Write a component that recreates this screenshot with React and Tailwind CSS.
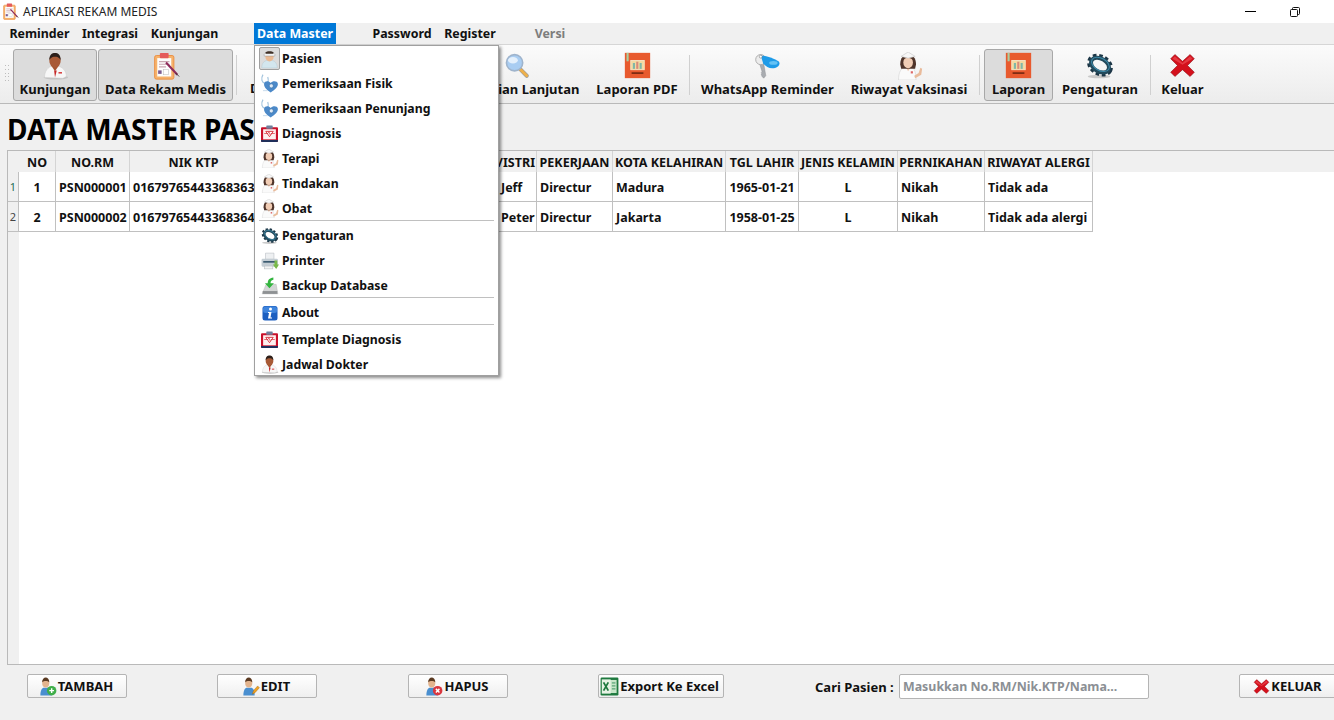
const FONT = "font-['Noto_Sans',sans-serif]";

const DoctorIcon = ({ className }) => (
  <svg viewBox="0 0 32 32" className={className}>
    <ellipse cx="17" cy="29" rx="14" ry="2.500" fill="#c4c4c4" />
    <path d="M4 29c0-7 4-12 9-13h6c5 1 10 5 10 12l-4 2z" fill="#f7f7f7" stroke="#c9c9c9" strokeWidth="0.500" />
    <path d="M12 16l4 6 4-6z" fill="#a5532f" />
    <path d="M15 21l1 8 2-8z" fill="#c62828" />
    <rect x="20" y="23" width="4" height="1.600" fill="#d32f2f" />
    <ellipse cx="16" cy="10" rx="6.500" ry="8" fill="#a85a36" />
    <path d="M9.500 9c0-6 3-8 6.500-8s6.500 2 6.500 8c-2-3-4.500-3.500-6.500-3.500S11.500 6 9.500 9z" fill="#2c1f1a" />
  </svg>
);

const ClipboardSyringeIcon = ({ className }) => (
  <svg viewBox="0 0 32 32" className={className}>
    <rect x="3" y="4" width="22" height="27" rx="2" fill="#f6b26b" stroke="#ea8a3a" />
    <rect x="6" y="7" width="16" height="21" fill="#fdfdfd" />
    <rect x="9" y="1" width="10" height="6" rx="1" fill="#e45b5b" />
    <path d="M8 11h12M8 14h12M8 17h8" stroke="#c9a7b0" strokeWidth="1.200" />
    <rect x="7" y="21" width="4" height="4" fill="#7a5a90" />
    <rect x="13" y="20" width="6" height="6" fill="#fff" stroke="#bbb" strokeWidth="0.600" />
    <path d="M16 12l13 14" stroke="#8e2a5a" strokeWidth="2.400" />
    <path d="M27 24l4 4" stroke="#333" strokeWidth="1" />
  </svg>
);

const MagnifierIcon = ({ className }) => (
  <svg viewBox="0 0 32 32" className={className}>
    <path d="M19 19l9 9" stroke="#9a9a9a" strokeWidth="5" strokeLinecap="round" />
    <path d="M20 20l8 8" stroke="#eeb04a" strokeWidth="3.400" strokeLinecap="round" />
    <circle cx="13" cy="12" r="10" fill="#a9cdf2" stroke="#9fb4cc" strokeWidth="2" />
    <ellipse cx="11" cy="9" rx="6" ry="4" fill="#e4f0fc" />
  </svg>
);

const ReportIcon = ({ className }) => (
  <svg viewBox="0 0 32 32" className={className}>
    <rect x="1" y="1" width="30" height="30" fill="#e85a2e" />
    <rect x="3" y="1" width="2.500" height="10" fill="#a9cfa0" />
    <rect x="8" y="10" width="16" height="11" fill="#f4d9a0" stroke="#f7e9cc" strokeWidth="1" />
    <rect x="10.500" y="13" width="2.500" height="7" fill="#7fb7a8" />
    <rect x="14.500" y="11.500" width="2.500" height="8.500" fill="#d98a7a" />
    <rect x="18.500" y="13" width="2.500" height="7" fill="#7fb7a8" />
    <rect x="9" y="24" width="14" height="2" fill="#7a2a12" />
  </svg>
);

const KeyIcon = ({ className }) => (
  <svg viewBox="0 0 32 32" className={className}>
    <path d="M6 12l5-1 3 17-2.500 3-2-2-1-3 1-1-1-1 1-1z" fill="#a9acb0" stroke="#85888c" strokeWidth="0.500" />
    <circle cx="8" cy="9" r="6" fill="#ececec" stroke="#a5a5a5" />
    <path d="M8 4c7 1 15 3 21 7 3 3 0 7-4 8-7 1-10-1-14-5z" fill="#1e9be8" />
    <ellipse cx="23" cy="13" rx="5" ry="2.200" fill="#63c2f5" />
    <circle cx="8" cy="5.500" r="1.700" fill="#fff" stroke="#666" strokeWidth="0.600" />
  </svg>
);

const NurseIcon = ({ className }) => (
  <svg viewBox="0 0 32 32" className={className}>
    <path d="M4 32c0-9 3-14 8-15h6c4 1 6 6 6 15z" fill="#fafafa" stroke="#cfcfcf" strokeWidth="0.600" />
    <path d="M12 17l3 5 3-5z" fill="#efc6ad" />
    <rect x="18" y="22" width="2.500" height="2.500" fill="#d66" />
    <path d="M22 27l5-3 2-6 2 1-1 7-7 4z" fill="#e9bb9b" />
    <path d="M6 14C6 6 10 3 15 3s9 3 9 11l-1 5H7z" fill="#4f342a" />
    <ellipse cx="15" cy="12" rx="5.500" ry="6.500" fill="#f1cdb5" />
    <path d="M9 9c2-3 9-3 12 0l-1-3H10z" fill="#4f342a" />
    <path d="M7 5l8-5 8 5-8 2z" fill="#f7f7f7" stroke="#bdbdbd" strokeWidth="0.600" />
  </svg>
);

const GearIcon = ({ className }) => (
  <svg viewBox="0 0 32 32" className={className}>
    <ellipse cx="15" cy="28" rx="13" ry="2" fill="#c9c9c9" />
    <g transform="rotate(30 16 15)">
      <ellipse cx="16" cy="15" rx="13.500" ry="10" fill="none" stroke="#1c3646" strokeWidth="4" strokeDasharray="4 3" />
      <ellipse cx="16" cy="15" rx="11" ry="7.500" fill="none" stroke="#234a5c" strokeWidth="4.500" />
      <ellipse cx="16" cy="14" rx="11" ry="7" fill="none" stroke="#3f8aa8" strokeWidth="1.200" />
    </g>
  </svg>
);

const RedXIcon = ({ className }) => (
  <svg viewBox="0 0 32 32" className={className}>
    <path d="M7 3l9 8 9-8 5 5-8 8 8 8-5 5-9-8-9 8-5-5 8-8-8-8z" fill="#d4101c" stroke="#8f0d14" strokeWidth="0.700" />
    <path d="M7 5l9 8 9-8 3 3-12 7-12-7z" fill="#f0555c" opacity="0.600" />
  </svg>
);

const PatientIcon = ({ className }) => (
  <svg viewBox="0 0 32 32" className={className}>
    <path d="M3 31c0-9 5-12 10-13h6c5 1 10 4 10 13z" fill="#d3e6ee" stroke="#a9c2cc" strokeWidth="0.600" />
    <ellipse cx="16" cy="12" rx="7" ry="8" fill="#eab992" />
    <path d="M7 8c2-4 16-4 18 0v3H7z" fill="#f5f5f5" stroke="#888" strokeWidth="0.700" />
    <path d="M9 5c3-3 11-3 14 0l-1 2H10z" fill="#3f3026" />
  </svg>
);

const StethoscopeIcon = ({ className }) => (
  <svg viewBox="0 0 32 32" className={className}>
    <path d="M5 1C1 8 3 15 9 16c5 0 6-5 4-11" fill="none" stroke="#a3c4de" strokeWidth="2" />
    <path d="M18 31C10 26 6 21 7 16c1-5 8-5 11-1 3-4 11-4 12 1 1 5-4 10-12 15z" fill="#4c89c8" />
    <circle cx="19" cy="20" r="3.500" fill="#dfeaf5" stroke="#2f6aa5" />
    <path d="M5 28h8" stroke="#c3d8ea" strokeWidth="1.500" />
  </svg>
);

const DiagnosisIcon = ({ className }) => (
  <svg viewBox="0 0 32 32" className={className}>
    <rect x="0" y="4" width="32" height="28" rx="2" fill="#c9102a" />
    <path d="M0 28h32v2a2 2 0 0 1-2 2H2a2 2 0 0 1-2-2z" fill="#1f2f5a" />
    <rect x="4" y="8" width="24" height="19" fill="#fdf0f0" />
    <rect x="10" y="1" width="12" height="6" rx="1" fill="#6f7f9c" />
    <path d="M9 12h14l-7 10z" fill="#fff" stroke="#d4202c" strokeWidth="1.600" />
    <path d="M6 16h7l2-3 2 5 2-2h7" fill="none" stroke="#d4202c" strokeWidth="1.200" />
  </svg>
);

const PrinterIcon = ({ className }) => (
  <svg viewBox="0 0 32 32" className={className}>
    <path d="M8 2h15v11H8z" fill="#eef0f2" stroke="#b5bcc2" />
    <rect x="1" y="12" width="29" height="14" rx="2" fill="#c4cdd4" />
    <rect x="4" y="16" width="21" height="3" fill="#3b5a70" />
    <rect x="6" y="25" width="15" height="5" fill="#f3f3f3" stroke="#b5bcc2" />
    <path d="M24 15v7h-3l6 8 5-8h-3v-7z" fill="#79b94a" />
  </svg>
);

const BackupIcon = ({ className }) => (
  <svg viewBox="0 0 32 32" className={className}>
    <path d="M9 13h18l3 17H2z" fill="#d3d5d5" stroke="#a5a5a5" strokeWidth="0.600" />
    <rect x="3" y="25" width="26" height="5" fill="#8e9193" />
    <path d="M22 1c-7 1-10 4-10 10H7l8 9 8-9h-6c0-3 1-5 5-6z" fill="#33b53f" />
  </svg>
);

const InfoIcon = ({ className }) => (
  <svg viewBox="0 0 32 32" className={className}>
    <rect x="1" y="2" width="30" height="29" rx="5" fill="#1c5fc0" />
    <rect x="2" y="3" width="28" height="13" rx="5" fill="#3e84dc" />
    <circle cx="17" cy="8" r="3" fill="#fff" />
    <path d="M12 14h7l-2 11h3v2h-8l2-11h-2z" fill="#fff" />
  </svg>
);

const ExcelIcon = ({ className }) => (
  <svg viewBox="0 0 32 32" className={className}>
    <rect x="1" y="1" width="30" height="30" rx="2" fill="#1f7a3f" />
    <rect x="14" y="5" width="14" height="22" fill="#c8e6c9" />
    <rect x="3" y="4" width="15" height="24" fill="#e8f3e5" />
    <path d="M6 9l8 14M14 9L6 23" stroke="#1f7a3f" strokeWidth="3" />
    <path d="M20 10h6M20 15h6M20 20h6" stroke="#2e8b57" strokeWidth="1.500" />
  </svg>
);

// Person with a small coloured badge, used by the bottom buttons
const UserBadgeIcon = ({ className, badge }) => (
  <svg viewBox="0 0 32 32" className={className}>
    <path d="M4 31c0-9 3-13 6-13h7c3 0 6 4 6 13z" fill="#4a8fd0" />
    <ellipse cx="13" cy="10" rx="6" ry="7.500" fill="#e3b48e" />
    <path d="M7 9c0-5 3-8 6-8s6 3 6 8c-3-3-9-3-12 0z" fill="#5a3a22" />
    {badge === 'add' && (
      <>
        <circle cx="23" cy="23" r="8" fill="#3fae49" />
        <path d="M23 19v8M19 23h8" stroke="#fff" strokeWidth="2.400" />
      </>
    )}
    {badge === 'delete' && (
      <>
        <circle cx="23" cy="23" r="8" fill="#d9363e" />
        <path d="M20 20l6 6M26 20l-6 6" stroke="#fff" strokeWidth="2.400" />
      </>
    )}
    {badge === 'edit' && <path d="M19 29l2-6 7-8 3 3-7 8z" fill="#f0a020" stroke="#8a5a10" strokeWidth="0.600" />}
  </svg>
);

const ToolButton = ({ label, width, active, children }) => (
  <div
    className={`flex h-[52px] shrink-0 flex-col items-center rounded-[3px] border pt-[2px] ${width} ${
      active ? 'border-[#a8a8a8] bg-[#dcdcdc]' : 'border-transparent'
    }`}
  >
    <div className="flex h-[27px] w-full items-center justify-center">{children}</div>
    <span className="mt-[2px] whitespace-nowrap text-[13px] font-bold leading-[16px] text-[#111]">{label}</span>
  </div>
);

const ToolDivider = ({ className }) => <div className={`mt-[6px] h-[40px] w-px shrink-0 bg-[#d0d0d0] ${className}`} />;

const MenuLabel = ({ children, className }) => (
  <span className={`flex h-[21px] shrink-0 items-center justify-center pt-[1px] text-[12.400px] font-bold ${className}`}>
    {children}
  </span>
);

const MenuRow = ({ icon, label, selected, last }) => (
  <div
    className={`relative flex items-center pl-[27px] text-[12.250px] font-bold text-[#111] ${
      last ? 'h-[23px] pt-[3px]' : 'h-[25px] pt-[1px]'
    }`}
  >
    <div
      className={`absolute left-[4px] top-[1px] flex h-[23px] w-[21px] items-center justify-center rounded-[2px] border ${
        selected ? 'border-[#a0a0a0] bg-[#dcdcdc]' : 'border-transparent'
      }`}
    >
      {icon}
    </div>
    {label}
  </div>
);

const MenuDivider = () => <div className="relative top-[-2px] mx-[4px] my-[0.5px] h-px bg-[#c0c0c0]" />;

const COLUMNS = [
  { title: 'NO', width: 'w-[37px]' },
  { title: 'NO.RM', width: 'w-[74px]' },
  { title: 'NIK KTP', width: 'w-[128px]' },
  { title: 'NAMA PASIEN', width: 'w-[240px]' },
  { title: 'SUAMI/ISTRI', width: 'w-[39px]', clip: true },
  { title: 'PEKERJAAN', width: 'w-[76px]' },
  { title: 'KOTA KELAHIRAN', width: 'w-[113px]' },
  { title: 'TGL LAHIR', width: 'w-[73px]' },
  { title: 'JENIS KELAMIN', width: 'w-[99px]' },
  { title: 'PERNIKAHAN', width: 'w-[87px]' },
  { title: 'RIWAYAT ALERGI', width: 'w-[108px]' },
];

const ROWS = [
  ['1', 'PSN000001', '01679765443368363', '', 'Jeff', 'Directur', 'Madura', '1965-01-21', 'L', 'Nikah', 'Tidak ada'],
  ['2', 'PSN000002', '01679765443368364', '', 'Peter', 'Directur', 'Jakarta', '1958-01-25', 'L', 'Nikah', 'Tidak ada alergi'],
];

const CENTERED = [0, 7, 8];

const BottomButton = ({ label, width, margin, icon }) => (
  <div
    className={`flex h-[24px] shrink-0 items-center justify-center gap-[1px] rounded-[2px] border border-[#b4b4b4] bg-gradient-to-b from-white to-[#efefef] pr-[3px] text-[13px] font-bold text-[#111] ${width} ${margin}`}
  >
    {icon}
    <span className="pt-[1px]">{label}</span>
  </div>
);

export default function App() {
  return (
    <div className={`relative flex h-[720px] w-[1334px] flex-col overflow-hidden bg-[#f0f0f0] ${FONT}`}>
      {/* Title bar */}
      <div className="flex h-[23px] shrink-0 items-center bg-white pl-[2px]">
        <ClipboardSyringeIcon className="h-[17px] w-[17px]" />
        <span className="ml-[4px] text-[12px] text-[#222]">APLIKASI REKAM MEDIS</span>
        <div className="ml-auto flex items-center pr-[34px]">
          <div className="h-px w-[11px] bg-black" />
          <svg viewBox="0 0 10 10" className="ml-[34px] h-[10px] w-[10px]" fill="none" stroke="#111" strokeWidth="1">
            <rect x="0.500" y="2.500" width="7" height="7" rx="1" />
            <path d="M2.500 2.500V1.500a1 1 0 0 1 1-1h5a1 1 0 0 1 1 1v5a1 1 0 0 1-1 1h-1" />
          </svg>
        </div>
      </div>

      {/* Menu bar */}
      <div className="flex h-[22px] shrink-0 items-center border-b border-[#d6d6d6] pl-[3px] text-[#111]">
        <MenuLabel className="w-[73px]">Reminder</MenuLabel>
        <MenuLabel className="w-[68px]">Integrasi</MenuLabel>
        <MenuLabel className="w-[81px]">Kunjungan</MenuLabel>
        <MenuLabel className="ml-[29px] w-[82px] bg-[#0078d7] text-white">Data Master</MenuLabel>
        <MenuLabel className="ml-[30px] w-[72px]">Password</MenuLabel>
        <MenuLabel className="w-[64px]">Register</MenuLabel>
        <MenuLabel className="ml-[26px] w-[44px] text-[#7d7d7d]">Versi</MenuLabel>
      </div>

      {/* Toolbar */}
      <div className="flex h-[59px] shrink-0 items-start border-b border-[#b9b9b9] bg-gradient-to-b from-[#fbfbfb] to-[#ececec] pt-[4px]">
        <div className="ml-[5px] mt-[16px] grid h-[18px] w-[5px] shrink-0 grid-cols-2 gap-[1px]">
          {Array.from({ length: 10 }).map((_, i) => (
            <div key={i} className="h-px w-px bg-[#bdbdbd]" />
          ))}
        </div>
        <div className="ml-[3px] flex items-start gap-[1px]">
          <ToolButton label="Kunjungan" width="w-[84px]" active>
            <DoctorIcon className="h-[28px] w-[28px]" />
          </ToolButton>
          <ToolButton label="Data Rekam Medis" width="w-[135px]" active>
            <ClipboardSyringeIcon className="h-[28px] w-[28px]" />
          </ToolButton>
        </div>
        <ToolDivider className="ml-[3px] mr-[5px]" />
        <div className="w-[199px] shrink-0 pl-[8px] pt-[31px] text-[13px] font-bold leading-[16px] text-[#111]">Data Pasien</div>
        <ToolButton label="Pencarian Lanjutan" width="w-[151px]">
          <MagnifierIcon className="h-[26px] w-[26px]" />
        </ToolButton>
        <ToolButton label="Laporan PDF" width="w-[90px]">
          <ReportIcon className="h-[27px] w-[27px]" />
        </ToolButton>
        <ToolDivider className="ml-[7px] mr-[3px]" />
        <ToolButton label="WhatsApp Reminder" width="w-[149px]">
          <KeyIcon className="h-[27px] w-[27px]" />
        </ToolButton>
        <ToolButton label="Riwayat Vaksinasi" width="w-[134px]">
          <NurseIcon className="h-[28px] w-[28px]" />
        </ToolButton>
        <ToolDivider className="ml-[3px] mr-[4px]" />
        <ToolButton label="Laporan" width="w-[69px]" active>
          <ReportIcon className="h-[27px] w-[27px]" />
        </ToolButton>
        <ToolButton label="Pengaturan" width="w-[94px]">
          <GearIcon className="h-[28px] w-[28px]" />
        </ToolButton>
        <ToolDivider className="ml-[3px] mr-[1px]" />
        <ToolButton label="Keluar" width="w-[61px]">
          <RedXIcon className="h-[27px] w-[27px]" />
        </ToolButton>
      </div>

      {/* Page title */}
      <div className="flex h-[46px] shrink-0 items-center pl-[7px] pt-[3px]">
        <h1 className="whitespace-nowrap text-[28px] font-bold leading-none text-black">DATA MASTER PASIEN</h1>
      </div>

      {/* Data table */}
      <div className="ml-[7px] flex h-[515px] shrink-0 flex-col border-l border-t border-b border-[#b9b9b9] bg-white">
        <div className="flex h-[21px] shrink-0 bg-[#f0f0f0]">
          <div className="w-[11px] shrink-0" />
          {COLUMNS.map((col) => (
            <div
              key={col.title}
              className={`flex shrink-0 items-center overflow-hidden whitespace-nowrap border-r border-[#d4d4d4] pt-[3px] text-[12.500px] font-bold text-[#111] ${col.width} ${
                col.clip ? 'justify-end pr-[1px]' : 'justify-center'
              }`}
            >
              {col.title}
            </div>
          ))}
        </div>
        <div className="flex min-h-0 flex-1">
          <div className="w-[11px] shrink-0 bg-[#f0f0f0]">
            {ROWS.map((row, i) => (
              <div
                key={row[0]}
                className={`flex h-[30px] items-center justify-center border-b border-r border-[#c0c0c0] pt-[2px] text-[11px] ${
                  i === 0 ? 'text-[#1f6f55]' : 'text-[#444]'
                }`}
              >
                {row[0]}
              </div>
            ))}
          </div>
          <div className="flex flex-col">
            {ROWS.map((row) => (
              <div key={row[0]} className="flex h-[30px]">
                {row.map((cell, i) => (
                  <div
                    key={i}
                    className={`flex shrink-0 items-center overflow-hidden whitespace-nowrap border-b border-r border-[#c0c0c0] pt-[3px] text-[12.500px] font-bold text-[#111] ${
                      COLUMNS[i].width
                    } ${CENTERED.includes(i) ? 'justify-center' : 'pl-[3px]'}`}
                  >
                    {cell}
                  </div>
                ))}
              </div>
            ))}
          </div>
        </div>
      </div>

      {/* Bottom actions */}
      <div className="flex flex-1 items-start pl-[27px] pt-[9px]">
        <BottomButton label="TAMBAH" width="w-[100px]" icon={<UserBadgeIcon badge="add" className="h-[19px] w-[19px]" />} />
        <BottomButton label="EDIT" width="w-[100px]" margin="ml-[90px]" icon={<UserBadgeIcon badge="edit" className="h-[19px] w-[19px]" />} />
        <BottomButton label="HAPUS" width="w-[100px]" margin="ml-[91px]" icon={<UserBadgeIcon badge="delete" className="h-[19px] w-[19px]" />} />
        <BottomButton label="Export Ke Excel" width="w-[126px]" margin="ml-[90px]" icon={<ExcelIcon className="h-[19px] w-[19px]" />} />
        <span className="ml-[91px] flex h-[24px] w-[84px] shrink-0 items-center pt-[3px] text-[13px] font-bold text-[#111]">Cari Pasien :</span>
        <div className="flex h-[25px] w-[250px] shrink-0 items-center rounded-[2px] border border-[#b4b4b4] bg-white pl-[3px] pt-[1px] text-[12.400px] font-bold text-[#8b8f94]">
          Masukkan No.RM/Nik.KTP/Nama...
        </div>
        <BottomButton label="KELUAR" width="w-[100px]" margin="ml-[90px]" icon={<RedXIcon className="h-[17px] w-[17px]" />} />
      </div>

      {/* Open "Data Master" dropdown */}
      <div className="absolute left-[254px] top-[45px] w-[245px] border border-[#a0a0a0] bg-white shadow-[2px_2px_3px_rgba(0,0,0,0.45)]">
        <MenuRow label="Pasien" selected icon={<PatientIcon className="h-[20px] w-[20px]" />} />
        <MenuRow label="Pemeriksaan Fisik" icon={<StethoscopeIcon className="h-[19px] w-[19px]" />} />
        <MenuRow label="Pemeriksaan Penunjang" icon={<StethoscopeIcon className="h-[19px] w-[19px]" />} />
        <MenuRow label="Diagnosis" icon={<DiagnosisIcon className="h-[17px] w-[17px]" />} />
        <MenuRow label="Terapi" icon={<NurseIcon className="h-[19px] w-[19px]" />} />
        <MenuRow label="Tindakan" icon={<NurseIcon className="h-[19px] w-[19px]" />} />
        <MenuRow label="Obat" icon={<NurseIcon className="h-[19px] w-[19px]" />} />
        <MenuDivider />
        <MenuRow label="Pengaturan" icon={<GearIcon className="h-[18px] w-[18px]" />} />
        <MenuRow label="Printer" icon={<PrinterIcon className="h-[18px] w-[18px]" />} />
        <MenuRow label="Backup Database" icon={<BackupIcon className="h-[18px] w-[18px]" />} />
        <MenuDivider />
        <MenuRow label="About" icon={<InfoIcon className="h-[16px] w-[16px]" />} />
        <MenuDivider />
        <MenuRow label="Template Diagnosis" icon={<DiagnosisIcon className="h-[17px] w-[17px]" />} />
        <MenuRow label="Jadwal Dokter" last icon={<DoctorIcon className="h-[19px] w-[19px]" />} />
      </div>
    </div>
  );
}
